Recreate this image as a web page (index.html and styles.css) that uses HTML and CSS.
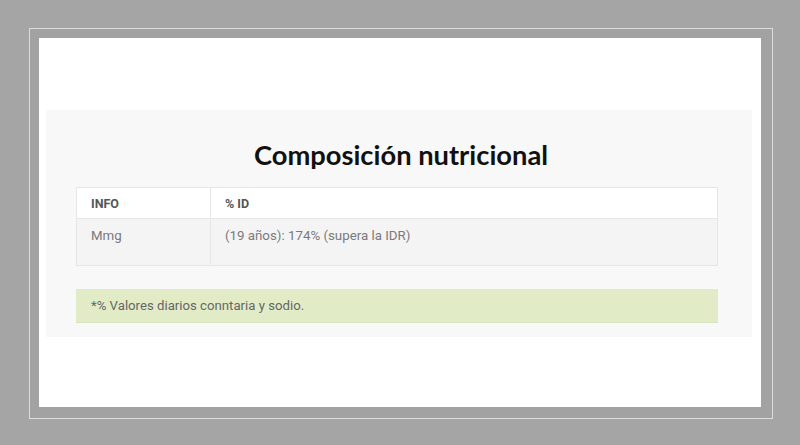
FILE: index.html
```html
<!DOCTYPE html>
<html lang="es">
<head>
<meta charset="utf-8">
<link rel="stylesheet" href="styles.css">
</head>
<body>
<div class="frame">
  <div class="page">
    <section class="card">
      <h2 class="title">Composición nutricional</h2>
      <table class="nutri">
        <thead>
          <tr><th class="c1">INFO</th><th>% ID</th></tr>
        </thead>
        <tbody>
          <tr><td class="c1">Mmg</td><td>(19 años): 174% (supera la IDR)</td></tr>
        </tbody>
      </table>
      <div class="note">*% Valores diarios conntaria y sodio.</div>
    </section>
  </div>
</div>
</body>
</html>
```
FILE: styles.css
```css
html, body { margin: 0; padding: 0; }
body {
  background: #a5a5a5;
  width: 800px;
  height: 445px;
  overflow: hidden;
  font-family: Roboto, "Liberation Sans", sans-serif;
}
.frame {
  margin: 28px 0 0 29px;
  border: 1px solid #dcdcdc;
  padding: 9px 11px 11px 9px;
  box-sizing: content-box;
  width: 722px;
  height: 369px;
  background: #a2a2a2;
}
.page {
  background: #ffffff;
  height: 369px;
  padding: 72px 9px 0 7px;
  box-sizing: border-box;
}
.card {
  background: #f8f8f8;
  height: 227px;
  padding: 26px 34px 0 30px;
  box-sizing: border-box;
}
.title {
  margin: 0 0 14px 8px;
  text-align: center;
  font-family: Lato, "Open Sans", sans-serif;
  font-weight: 700;
  font-size: 27.3px;
  line-height: 37px;
  color: #111;
}
.nutri {
  width: 642px;
  border-collapse: collapse;
  font-size: 13.3px;
}
.nutri th, .nutri td {
  border: 1px solid #e6e6e6;
  text-align: left;
  padding: 0 14px;
}
.nutri th {
  background: #fff;
  height: 30px;
  font-size: 12.5px;
  font-weight: 700;
  color: #555;
}
.nutri td {
  background: #f4f4f5;
  height: 47px;
  vertical-align: top;
  padding-top: 9px;
  box-sizing: border-box;
  color: #7a7a7a;
}
.nutri .c1 { width: 105px; }
.note {
  margin-top: 23px;
  width: 642px;
  height: 34px;
  box-sizing: border-box;
  background: #e1ecc6;
  border-bottom: 1px solid #d9e3c0;
  padding: 0 15px;
  line-height: 33px;
  font-size: 13.2px;
  color: #666;
}
```
